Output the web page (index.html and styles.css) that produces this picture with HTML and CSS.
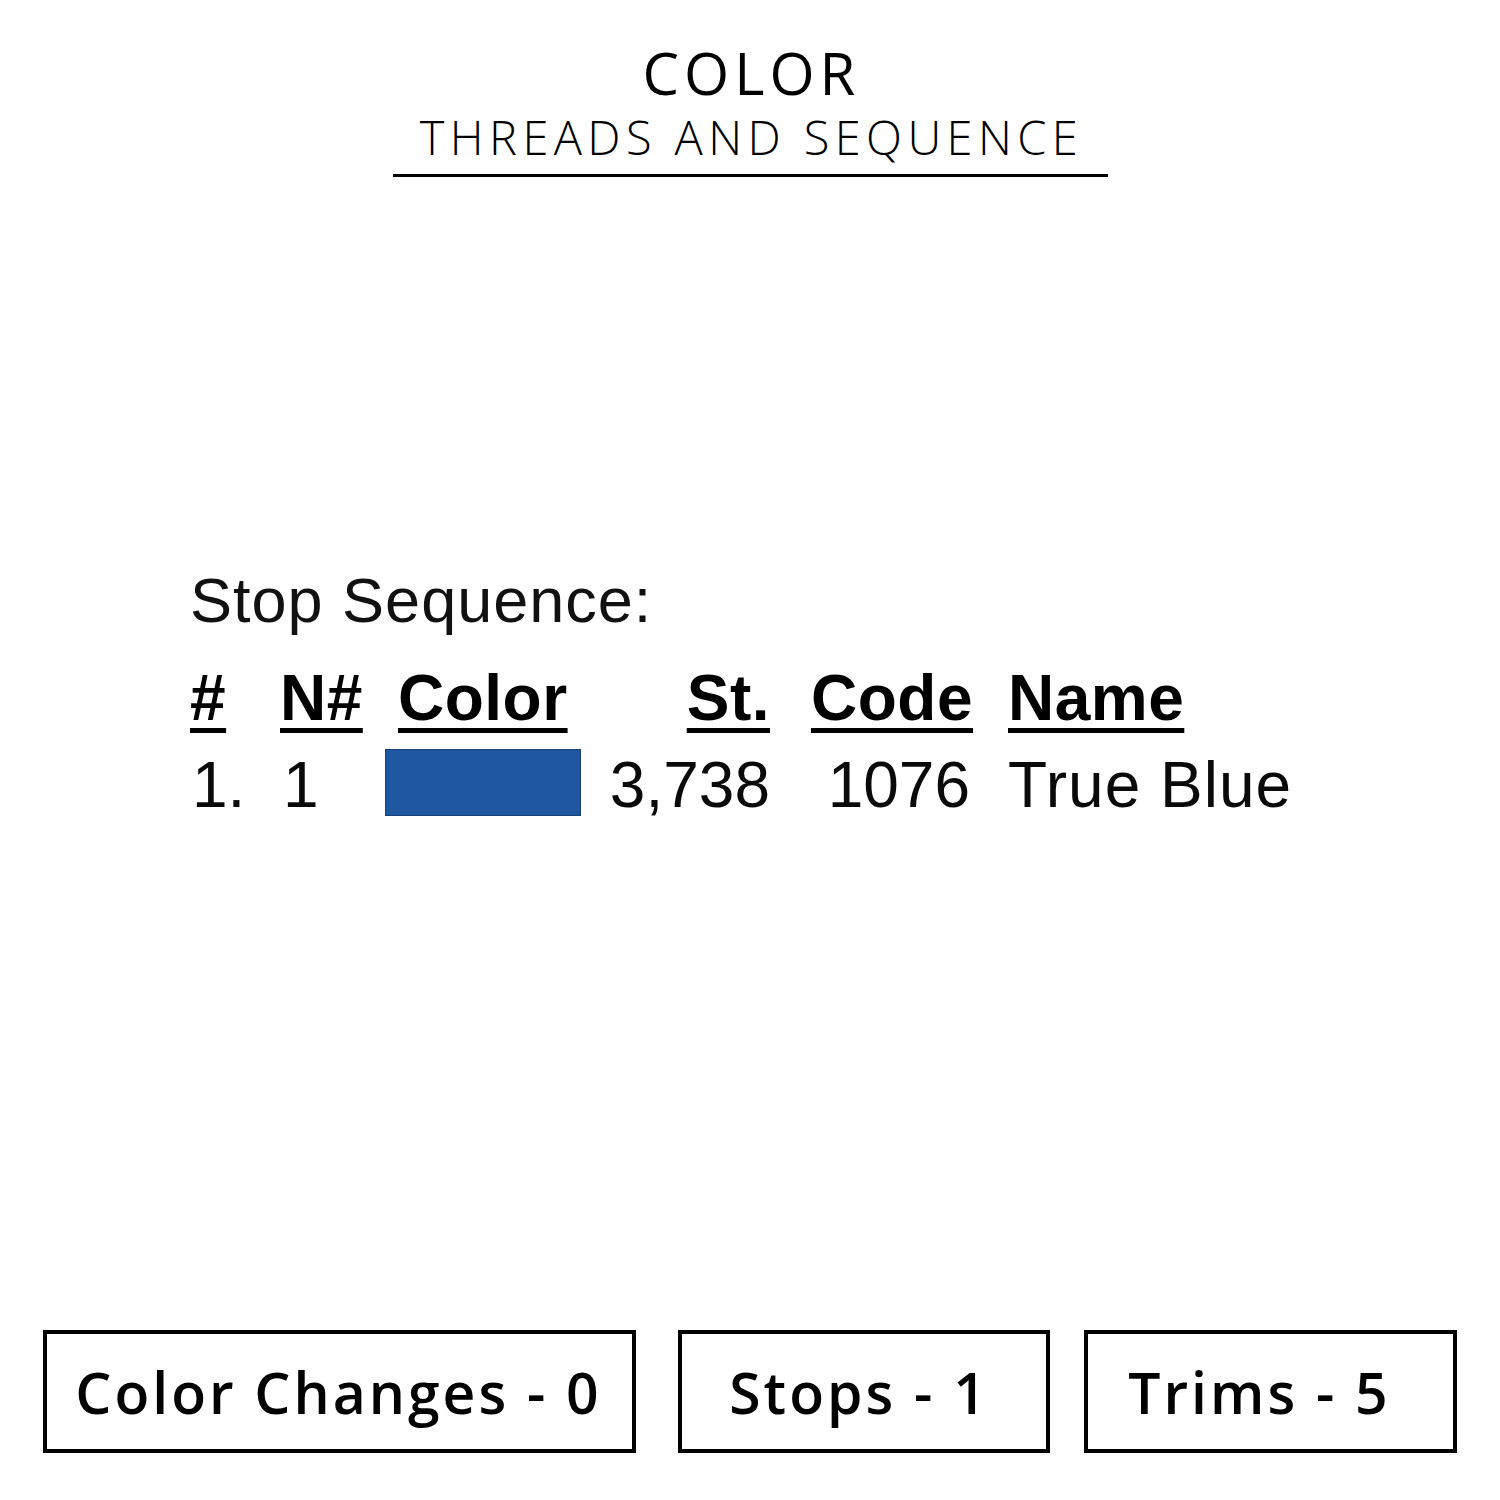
FILE: index.html
```html
<!DOCTYPE html>
<html>
<head>
<meta charset="utf-8">
<link rel="stylesheet" href="styles.css">
</head>
<body>
<div class="page">
  <header class="head">
    <div class="title">COLOR</div>
    <div class="subtitle">THREADS AND SEQUENCE</div>
  </header>

  <section class="seq">
    <div class="seq-title">Stop Sequence:</div>
    <div class="grid">
      <div class="h c1"><u>#</u></div>
      <div class="h c2"><u>N#</u></div>
      <div class="h c3"><u>Color</u></div>
      <div class="h c4"><u>St.</u></div>
      <div class="h c5"><u>Code</u></div>
      <div class="h c6"><u>Name</u></div>

      <div class="d c1 n1">1.</div>
      <div class="d c2 n2">1</div>
      <div class="d c3"><div class="swatch"></div></div>
      <div class="d c4">3,738</div>
      <div class="d c5 code">1076</div>
      <div class="d c6">True Blue</div>
    </div>
  </section>

  <footer class="stats">
    <div class="box b1">Color Changes - 0</div>
    <div class="box b2">Stops - 1</div>
    <div class="box b3">Trims - 5</div>
  </footer>
</div>
</body>
</html>
```

FILE: styles.css
```css
html, body {
  margin: 0;
  padding: 0;
  background: #ffffff;
}

.page {
  width: 1500px;
  height: 1500px;
  display: flex;
  flex-direction: column;
  color: #000;
}

.head {
  display: flex;
  flex-direction: column;
  align-items: center;
  padding-top: 37px;
}

.title {
  font-family: "Open Sans", sans-serif;
  font-weight: 400;
  font-size: 58px;
  line-height: 72px;
  letter-spacing: 5px;
  padding-left: 3px;
}

.subtitle {
  font-family: "Open Sans", sans-serif;
  font-weight: 300;
  font-size: 47px;
  line-height: 56px;
  width: 715px;
  text-align: center;
  letter-spacing: 5.4px;
  text-indent: 3px;
  white-space: nowrap;
  border-bottom: 3px solid #000;
  padding-bottom: 9px;
}

.seq {
  margin-top: 388px;
  padding-left: 190px;
  font-family: "Liberation Sans", Arial, sans-serif;
}

.seq-title {
  font-size: 63px;
  line-height: 70px;
  letter-spacing: 1px;
  color: #111;
}

.grid {
  margin-top: 27px;
  display: grid;
  grid-template-columns: 90px 105px 215px 170px 203px auto;
  grid-template-rows: 72px 72px;
  row-gap: 15px;
  align-items: start;
  font-size: 64px;
  line-height: 72px;
}

.h {
  font-weight: 700;
  letter-spacing: 0.5px;
}

.h u {
  text-decoration-thickness: 5px;
  text-underline-offset: 8px;
}

.d {
  font-weight: 400;
  color: #0a0a0a;
}

.c3.h { padding-left: 13px; }
.c4, .c5 { text-align: right; }
.c6 { padding-left: 35px; }
.c6.d { letter-spacing: 1px; }
.n1 { padding-left: 2px; }
.n2 { padding-left: 3px; }
.code { padding-right: 3px; }

.swatch {
  width: 194px;
  height: 65px;
  background: #1f57a3;
  border: 1px solid #1a3f73;
}

.stats {
  margin-top: auto;
  margin-bottom: 47px;
  padding-left: 43px;
  display: flex;
  align-items: stretch;
}

.box {
  height: 123px;
  border: 4px solid #000;
  display: flex;
  align-items: center;
  justify-content: center;
  font-family: "Open Sans", sans-serif;
  font-weight: 600;
  font-size: 57px;
  letter-spacing: 3px;
  box-sizing: border-box;
}

.b1 { width: 593px; margin-right: 42px; padding-right: 2px; }
.b2 { width: 372px; margin-right: 34px; padding-right: 10px; }
.b3 { width: 373px; padding-right: 22px; }
```
